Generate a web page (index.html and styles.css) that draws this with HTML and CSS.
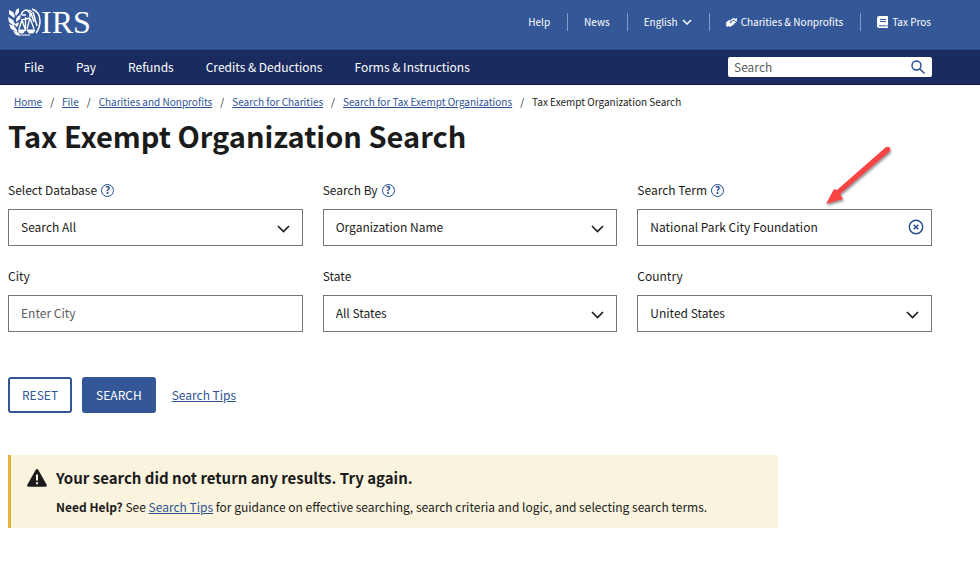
FILE: index.html
```html
<!DOCTYPE html>
<html lang="en">
<head>
    <meta charset="UTF-8">
    <meta name="viewport" content="width=device-width, initial-scale=1.0">
    <title>Tax Exempt Organization Search</title>
    <link rel="stylesheet" href="styles.css">
</head>
<body>
    <header>
        <div class="top-bar">
            <a href="#" class="logo">
                <svg class="emblem" width="33" height="30" viewBox="0 0 33 30" fill="none" stroke="#fff" aria-hidden="true">
                    <!-- wreath -->
                    <path fill="#fff" stroke="none" d="M1 3l4 2 2 4-1 2-5-4zM0 10l5 3 2 4-1 2-5-4zM1 17l5 2 3 4v2l-6-3zM11 1v4L8 9 7 7l1-4zM13 8l-1 4-4 3V12l2-3zM11 15l-1 4-2 1-1-3zM5 24l5 1 3 4-5-1z"/>
                    <!-- eagle -->
                    <path stroke-width="1.5" d="M13 8c1-3 3-5 6-5l3 3v4M14 8h4M24 2c6 2 8 7 8 12s-1 8-4 12M23 6l3 9M25 5l4 14M21 3l3 2"/>
                    <!-- scales -->
                    <path stroke-width="1.300" d="M13 13l9-2M17.500 10v14M14 13l-3 9M14 13l3 9M22 11l-3 11M22 11l4 11"/>
                    <path fill="#fff" stroke-width="1" d="M10 23h7l-2 3h-3zM19 23h8l-2 3h-4zM13 28h9"/>
                </svg>
                <span>IRS</span>
            </a>
            <ul class="top-links">
                <li><a href="#">Help</a></li>
                <li><a href="#">News</a></li>
                <li>
                    <a href="#">English
                        <svg width="10" height="6" viewBox="0 0 10 6" fill="none" stroke="#fff" stroke-width="1.5" aria-hidden="true"><path d="M1 1l4 4 4-4"/></svg>
                    </a>
                </li>
                <li>
                    <a href="#">
                        <svg width="11" height="9" viewBox="0 0 12 10" fill="#fff" aria-hidden="true"><path d="M0 5l2-2 3-1-1 3c0 1 2 1 2 0l1-2 3 1 1 1-2 1v1l-2 1v1H6L4 10 3 9 1 10 0 8zM6 1l3-1 1 1 2-1v4l-1 0-3-2-2 1-1 2 0-2z"/></svg>
                        Charities &amp; Nonprofits
                    </a>
                </li>
                <li>
                    <a href="#">
                        <svg width="11" height="12" viewBox="0 0 11 12" aria-hidden="true"><path fill="#fff" d="M2 0h8.500q.5 0 .5.500v8l-.6.700v1.500h.6V12H2Q0 12 0 10V2Q0 0 2 0z"/><path stroke="#345798" d="M3 3.500h6M3 5.500h6M2 9.800h7.500"/></svg>
                        Tax Pros
                    </a>
                </li>
            </ul>
        </div>
        <div class="nav-bar">
            <nav>
                <a href="#">File</a>
                <a href="#">Pay</a>
                <a href="#">Refunds</a>
                <a href="#">Credits &amp; Deductions</a>
                <a href="#">Forms &amp; Instructions</a>
            </nav>
            <form class="site-search">
                <input type="text" placeholder="Search" aria-label="Search">
                <button type="button" aria-label="Submit search">
                    <svg width="14" height="14" viewBox="0 0 14 14" fill="none" stroke="#1f4a91" stroke-width="1.400" aria-hidden="true"><circle cx="5.500" cy="5.500" r="4.500"/><path d="M9 9l4.500 4.500"/></svg>
                </button>
            </form>
        </div>
    </header>

    <main>
        <ol class="breadcrumb">
            <li><a href="#">Home</a></li>
            <li><a href="#">File</a></li>
            <li><a href="#">Charities and Nonprofits</a></li>
            <li><a href="#">Search for Charities</a></li>
            <li><a href="#">Search for Tax Exempt Organizations</a></li>
            <li>Tax Exempt Organization Search</li>
        </ol>

        <h1>Tax Exempt Organization Search</h1>

        <form>
            <div class="fields">
                <div class="field">
                    <div class="label-row">
                        <label for="database">Select Database</label>
                        <button type="button" class="help" aria-label="Help on databases">?</button>
                    </div>
                    <div class="control">
                        <select id="database"><option>Search All</option></select>
                        <svg class="arrow" width="13" height="8" viewBox="0 0 13 8" aria-hidden="true"><path d="M1 1l5.500 5.500L12 1"/></svg>
                    </div>
                </div>
                <div class="field">
                    <div class="label-row">
                        <label for="search-by">Search By</label>
                        <button type="button" class="help" aria-label="Help on search by">?</button>
                    </div>
                    <div class="control">
                        <select id="search-by"><option>Organization Name</option></select>
                        <svg class="arrow" width="13" height="8" viewBox="0 0 13 8" aria-hidden="true"><path d="M1 1l5.500 5.500L12 1"/></svg>
                    </div>
                </div>
                <div class="field">
                    <div class="label-row">
                        <label for="term">Search Term</label>
                        <button type="button" class="help" aria-label="Help on search term">?</button>
                    </div>
                    <div class="control">
                        <input type="text" id="term" value="National Park City Foundation">
                        <button type="button" class="clear" aria-label="Clear search term">
                            <svg width="16" height="16" viewBox="0 0 16 16" fill="none" stroke="#1f4a91" stroke-width="1.400" aria-hidden="true"><circle cx="8" cy="8" r="6.700"/><path d="M5.700 5.700l4.600 4.600M10.300 5.700l-4.600 4.600"/></svg>
                        </button>
                    </div>
                    <svg class="pointer" width="70" height="64" viewBox="0 0 70 64" aria-hidden="true">
                        <path d="M62 1q3-1 4 1 1 2-1 4L16 48l3 5L2 58l8-15 3 1z"/>
                    </svg>
                </div>
                <div class="field">
                    <div class="label-row"><label for="city">City</label></div>
                    <div class="control"><input type="text" id="city" placeholder="Enter City"></div>
                </div>
                <div class="field">
                    <div class="label-row"><label for="state">State</label></div>
                    <div class="control">
                        <select id="state"><option>All States</option></select>
                        <svg class="arrow" width="13" height="8" viewBox="0 0 13 8" aria-hidden="true"><path d="M1 1l5.500 5.500L12 1"/></svg>
                    </div>
                </div>
                <div class="field">
                    <div class="label-row"><label for="country">Country</label></div>
                    <div class="control">
                        <select id="country"><option>United States</option></select>
                        <svg class="arrow" width="13" height="8" viewBox="0 0 13 8" aria-hidden="true"><path d="M1 1l5.500 5.500L12 1"/></svg>
                    </div>
                </div>
            </div>

            <div class="actions">
                <button type="reset" class="btn">RESET</button>
                <button type="button" class="btn btn-primary">SEARCH</button>
                <a href="#">Search Tips</a>
            </div>
        </form>

        <div class="alert">
            <svg width="20" height="18" viewBox="0 0 20 18" aria-hidden="true"><path fill="#1b1b1b" d="M10 0q.8 0 1.200.7l8.500 15q.6 1.800-1 2.100H1.300q-1.600-.3-1-2.100l8.500-15Q9.200 0 10 0z"/><path stroke="#faf3de" stroke-width="2" d="M10 5.500v6M10 13.200v2"/></svg>
            <div>
                <h2>Your search did not return any results. Try again.</h2>
                <p><strong>Need Help?</strong> See <a href="#">Search Tips</a> for guidance on effective searching, search criteria and logic, and selecting search terms.</p>
            </div>
        </div>
    </main>
</body>
</html>
```
FILE: styles.css
```css
* {
    margin: 0;
    padding: 0;
    box-sizing: border-box;
}

body {
    font-family: "Noto Sans CJK SC", "Noto Sans", sans-serif;
    font-size: 12px;
    line-height: 20px;
    color: #1b1b1b;
    background-color: #fff;
}

input,
select,
button {
    font: inherit;
    color: inherit;
}

ul,
ol {
    list-style: none;
}

a {
    color: #2e5395;
}

.top-bar {
    display: flex;
    justify-content: space-between;
    height: 50px;
    padding: 0 49px 0 8px;
    background-color: #345798;
    border-bottom: 1px solid #2b4c8c;
}

.logo {
    display: flex;
    align-items: center;
    height: 43px;
    color: #fff;
    font-family: "Liberation Serif", serif;
    font-size: 32px;
    line-height: 32px;
    text-decoration: none;
}

.top-links {
    display: flex;
    align-items: center;
    height: 44px;
    font-size: 10px;
}

.top-links li + li {
    margin-left: 17px;
    padding-left: 16px;
    border-left: 1px solid #7f9bcd;
}

.top-links li {
    line-height: 18px;
}

.top-links a {
    display: flex;
    align-items: center;
    gap: 4px;
    color: #fff;
    text-decoration: none;
}

.nav-bar {
    display: flex;
    justify-content: space-between;
    align-items: center;
    height: 35px;
    padding: 0 48px 0 24px;
    background-color: #1a2c5f;
    border-bottom: 1px solid #0c1740;
}

nav {
    display: flex;
    gap: 32px;
}

nav a {
    color: #fff;
    text-decoration: none;
}

.site-search {
    display: flex;
    width: 204px;
    height: 20px;
    background-color: #fff;
    border-radius: 2px;
}

.site-search input {
    flex: 1;
    min-width: 0;
    padding: 0 6px;
    border: none;
    background: none;
}

.site-search button {
    display: flex;
    align-items: center;
    padding: 0 7px;
    border: none;
    background: none;
}

input::placeholder {
    color: #5c5c5c;
    opacity: 1;
}

main {
    padding: 8px 48px 0 8px;
}

.breadcrumb {
    display: flex;
    padding-left: 6px;
    font-size: 10px;
    line-height: 18px;
}

.breadcrumb li + li::before {
    content: "/";
    margin: 0 8px;
}

h1 {
    font-size: 29px;
    line-height: 40px;
    margin-top: 4px;
}

.fields {
    display: grid;
    grid-template-columns: repeat(3, 1fr);
    gap: 20px;
    margin-top: 25px;
}

.field {
    position: relative;
}

.label-row {
    display: flex;
    align-items: center;
    gap: 4px;
    margin-bottom: 9px;
}

.help {
    width: 13px;
    height: 13px;
    border: 1px solid #1f4a91;
    border-radius: 50%;
    background: none;
    color: #1f4a91;
    font-size: 10px;
    font-weight: bold;
    line-height: 10px;
}

.control {
    position: relative;
}

.control input,
.control select {
    display: block;
    width: 100%;
    height: 37px;
    padding: 0 12px 2px;
    border: 1px solid #71767a;
    border-radius: 0;
    background-color: #fff;
    appearance: none;
}

.arrow {
    position: absolute;
    top: 16px;
    right: 13px;
    fill: none;
    stroke: #1b1b1b;
    stroke-width: 1.6;
    pointer-events: none;
}

.clear {
    position: absolute;
    top: 10px;
    right: 8px;
    width: 16px;
    height: 16px;
    border: none;
    background: none;
}

.clear svg {
    display: block;
}

.pointer {
    position: absolute;
    top: -34px;
    right: 38px;
    fill: #f94444;
    filter: drop-shadow(1px 2px 1px rgba(0, 0, 0, 0.4));
    pointer-events: none;
}

.actions {
    display: flex;
    align-items: center;
    margin-top: 45px;
}

.btn {
    height: 36px;
    padding: 0 12px;
    margin-right: 10px;
    border: 2px solid #345798;
    border-radius: 3px;
    background-color: #fff;
    color: #345798;
}

.btn-primary {
    margin-right: 16px;
    background-color: #345798;
    color: #fff;
}

.alert {
    display: flex;
    gap: 9px;
    width: 83.33%;
    margin-top: 42px;
    padding: 13px 16px 11px;
    border-left: 3px solid #e5b03c;
    background-color: #faf3de;
}

.alert svg {
    margin-top: 1px;
}

h2 {
    font-size: 15px;
    line-height: 20px;
}

.alert p {
    margin-top: 9px;
}
```
